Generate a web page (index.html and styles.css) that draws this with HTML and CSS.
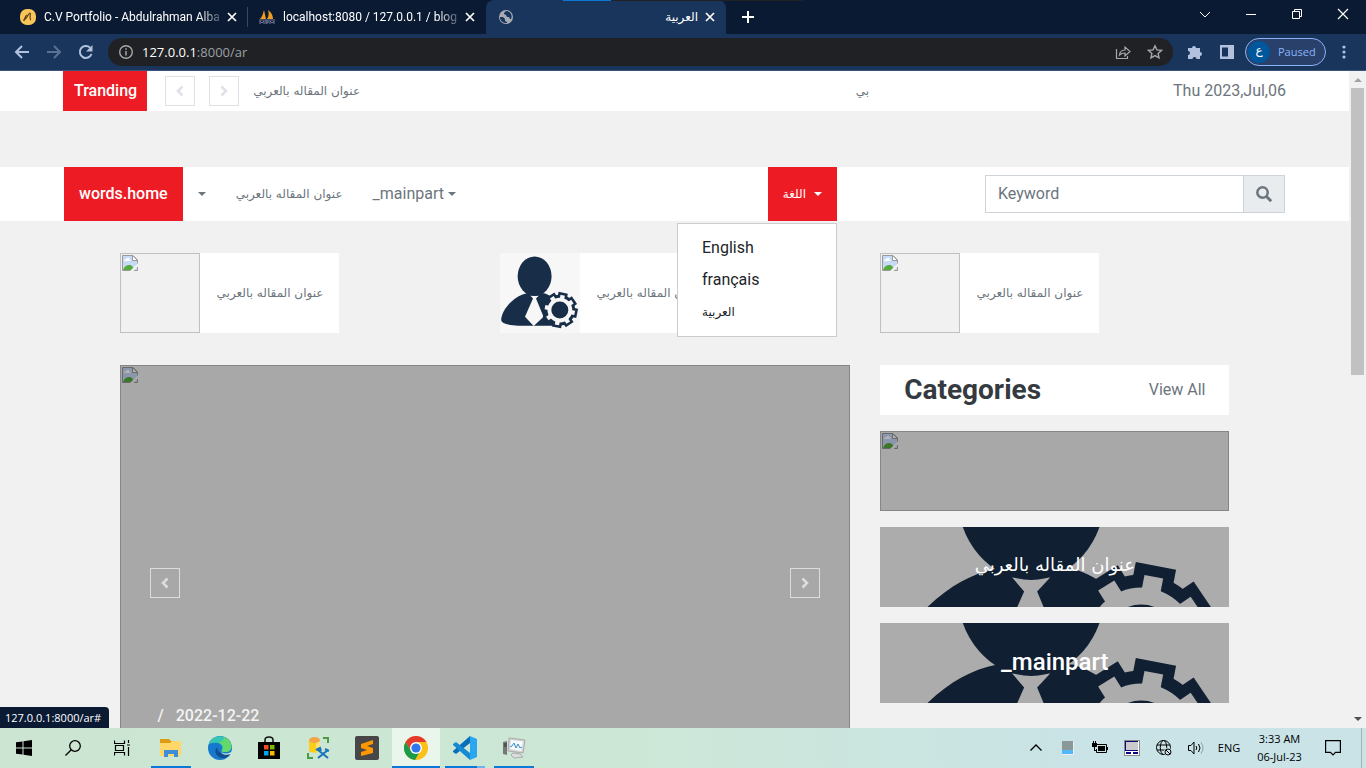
FILE: index.html
```html
<!DOCTYPE html>
<html lang="en">
<head>
<meta charset="utf-8">
<title>العربية</title>
<link rel="stylesheet" href="styles.css">
</head>
<body>
<svg class="defs" aria-hidden="true">
  <symbol id="broken" viewBox="0 0 16 16">
    <path d="M.5.5h10.500l4.500 4.500v10.500H.5z" fill="#c6d9f6" stroke="#999"/>
    <path d="M2 6c0-2 2-1 2.500-2.500C6 2 7.500 3 7.500 4.500 9 4.500 9 6 8 6z" fill="#fff"/>
    <path d="M1 15c1.500-4 4-5 6.500-5 2 0 3.500 1.500 5 5z" fill="#57ab3c"/>
    <path d="M10.500.5v5h5z" fill="#fff" stroke="#999"/>
    <path d="M8 16 16 8v3.500L11.500 16z" fill="#f1f1f1"/>
  </symbol>
  <symbol id="person" viewBox="0 0 349 349" preserveAspectRatio="xMidYMid slice">
    <rect width="349" height="349" fill="#f7f7f7"/>
    <path d="M5 290C8 262 26 234 48 214c22-21 44-33 69-38h76c12 4 28 12 40 22v119H80c-42-2-75-9-75-27z" fill="#182e48"/>
    <path d="M132 185h38l-13 14 33 79-43 40-38-40 35-79z" fill="#f7f7f7"/>
    <ellipse cx="151" cy="101.500" rx="74" ry="86" fill="#182e48"/>
    <g transform="translate(261 249)">
      <g fill="#182e48"><circle r="67"/>
        <path d="M-20.500-77h41V0h-41z" transform="rotate(11)"/><path d="M-20.500-77h41V0h-41z" transform="rotate(56)"/><path d="M-20.500-77h41V0h-41z" transform="rotate(101)"/><path d="M-20.500-77h41V0h-41z" transform="rotate(146)"/><path d="M-20.500-77h41V0h-41z" transform="rotate(191)"/><path d="M-20.500-77h41V0h-41z" transform="rotate(236)"/><path d="M-20.500-77h41V0h-41z" transform="rotate(281)"/><path d="M-20.500-77h41V0h-41z" transform="rotate(328)"/>
      </g>
      <g fill="#f7f7f7"><circle r="54"/>
        <path d="M-9.500-66h19V0h-19z" transform="rotate(11)"/><path d="M-9.500-66h19V0h-19z" transform="rotate(56)"/><path d="M-9.500-66h19V0h-19z" transform="rotate(101)"/><path d="M-9.500-66h19V0h-19z" transform="rotate(146)"/><path d="M-9.500-66h19V0h-19z" transform="rotate(191)"/><path d="M-9.500-66h19V0h-19z" transform="rotate(236)"/><path d="M-9.500-66h19V0h-19z" transform="rotate(281)"/><path d="M-9.500-66h19V0h-19z" transform="rotate(328)"/>
      </g>
      <circle r="37" fill="#182e48"/>
    </g>
  </symbol>
  <symbol id="left" viewBox="0 0 16 16"><path d="M10.500 3.500 6 8l4.500 4.500" fill="none" stroke="currentColor" stroke-width="2.500"/></symbol>
  <symbol id="right" viewBox="0 0 16 16"><path d="M5.500 3.500 10 8l-4.500 4.500" fill="none" stroke="currentColor" stroke-width="2.500"/></symbol>
  <symbol id="close" viewBox="0 0 16 16"><path d="m4 4 8 8m0-8-8 8" fill="none" stroke="currentColor" stroke-width="1.700"/></symbol>
</svg>
<div class="screen">
  <header class="tabs">
    <div class="tab">
      <svg class="i16" viewBox="0 0 16 16"><rect width="16" height="16" rx="7" fill="#f9c55b"/><path d="M3 11c4 0 5-7 7-7 1 0-1 6 1 7M4 12c1-4 2-6 3-6" fill="none" stroke="#5e4013" stroke-width="1.200"/></svg>
      <span class="tab-title">C.V Portfolio - Abdulrahman Alba</span>
      <button class="tab-x" aria-label="Close tab"><svg class="i16"><use href="#close"/></svg></button>
    </div>
    <div class="tab tab-two">
      <svg class="i16" viewBox="0 0 16 16"><path d="M1 10C3 8 4 5 5 1l2 9zM8 10c2-3 2-6 1-9 3 2 5 5 5 9z" fill="#f29b22"/><path d="M0 11h16M1 15v-3l2 2 2-2v3M7 15v-3h2v2H7m4 1v-3l2 2 2-2v3" fill="none" stroke="#777b9f"/></svg>
      <span class="tab-title">localhost:8080 / 127.0.0.1 / blog /</span>
      <button class="tab-x" aria-label="Close tab"><svg class="i16"><use href="#close"/></svg></button>
    </div>
    <div class="tab tab-on">
      <svg class="i16" viewBox="0 0 16 16"><circle cx="8" cy="8" r="7" fill="#a7acb4"/><path d="M2 8h3l2 2v2l2 1v1c-4 0-7-2-7-6zM8 2 6 4v1l2 1 1 2h2l1 2h1c2-4-1-8-5-8z" fill="#1a355b"/></svg>
      <span class="tab-title ar">العربية</span>
      <button class="tab-x" aria-label="Close tab"><svg class="i16"><use href="#close"/></svg></button>
    </div>
    <button class="newtab" aria-label="New tab"><svg class="i16" viewBox="0 0 16 16"><path d="M8 2v12M2 8h12" stroke="#fff" stroke-width="2"/></svg></button>
    <div class="winctl">
      <button aria-label="Search tabs"><svg class="i16" viewBox="0 0 16 16"><path d="m3 6 5 5 5-5" fill="none" stroke="currentColor"/></svg></button>
      <button aria-label="Minimize"><svg class="i16" viewBox="0 0 16 16"><path d="M3 8.500h10" stroke="currentColor"/></svg></button>
      <button aria-label="Restore"><svg class="i16" viewBox="0 0 16 16"><path d="M3.500 5.500h7v7h-7zM5.500 5V3.500h7v7H11" fill="none" stroke="currentColor"/></svg></button>
      <button aria-label="Close"><svg class="i16" viewBox="0 0 16 16"><path d="m3 3 10 10m0-10L3 13" stroke="currentColor" stroke-width="1.200"/></svg></button>
    </div>
    <div class="drag"></div>
  </header>
  <div class="toolbar">
    <button class="tool" aria-label="Back"><svg class="i16" viewBox="0 0 16 16"><path d="M15 8H2m6-6L2 8l6 6" fill="none" stroke="currentColor" stroke-width="2"/></svg></button>
    <button class="tool dim" aria-label="Forward"><svg class="i16" viewBox="0 0 16 16"><path d="M1 8h13M8 2l6 6-6 6" fill="none" stroke="currentColor" stroke-width="2"/></svg></button>
    <button class="tool" aria-label="Reload"><svg class="i16" viewBox="0 0 16 16"><path d="M13.500 10A6 6 0 1 1 12 3.600" fill="none" stroke="currentColor" stroke-width="2"/><path d="M14.500 1v6.500H8z" fill="currentColor"/></svg></button>
    <div class="omni">
      <svg class="i16" viewBox="0 0 16 16"><circle cx="8" cy="8" r="6.300" fill="none" stroke="currentColor" stroke-width="1.400"/><path d="M8 7v4.500M8 4.200v1.600" stroke="currentColor" stroke-width="1.500"/></svg>
      <span class="url"><b>127.0.0.1</b>:8000/ar</span>
      <button class="tool" aria-label="Share"><svg class="i16" viewBox="0 0 16 16"><path d="M1.500 5v9.500h11V12M4.500 11c.5-4 3-5 5.500-5V3l5 4.500-5 4.500V9c-2.500 0-4 .5-5.500 2z" fill="none" stroke="currentColor" stroke-width="1.200"/></svg></button>
      <button class="tool" aria-label="Bookmark"><svg class="i16" viewBox="0 0 16 16"><path d="m8 1.800 1.900 4.100 4.500.5-3.300 3 .9 4.400-4-2.200-4 2.200.9-4.400-3.300-3 4.500-.5z" fill="none" stroke="currentColor" stroke-width="1.400"/></svg></button>
    </div>
    <button class="tool ext" aria-label="Extensions"><svg class="i16" viewBox="0 0 16 16"><path d="M1 4h4a2 2 0 1 1 4 0h4v4a2 2 0 1 1 0 4v3H9.500a2 2 0 0 0-4 0H1v-4a2 2 0 1 0 0-4z" fill="currentColor"/></svg></button>
    <button class="tool" aria-label="Side panel"><svg class="i16" viewBox="0 0 16 16"><path d="M1 1h14v14H1zm2 2.500v9h6v-9z" fill="currentColor" fill-rule="evenodd"/></svg></button>
    <button class="profile"><span class="avatar">ع</span>Paused</button>
    <button class="tool dots" aria-label="Menu"><svg class="i16" viewBox="0 0 16 16"><circle cx="8" cy="3" r="1.600"/><circle cx="8" cy="8" r="1.600"/><circle cx="8" cy="13" r="1.600"/></svg></button>
  </div>

  <div class="view">
    <main class="page">
      <div class="topbar">
        <div class="trend">Tranding</div>
        <button class="step first" aria-label="Previous"><svg class="i16"><use href="#left"/></svg></button>
        <button class="step" aria-label="Next"><svg class="i16"><use href="#right"/></svg></button>
        <div class="ticker ar"><a href="#" dir="rtl">عنوان المقاله بالعربي</a><a href="#" dir="rtl">بي</a></div>
        <div class="date">Thu 2023,Jul,06</div>
      </div>
      <nav class="nav">
        <a class="nav-link on" href="#">words.home</a>
        <button class="nav-link" aria-label="More"><span class="caret"></span></button>
        <a class="nav-link ar" href="#" dir="rtl">عنوان المقاله بالعربي</a>
        <button class="nav-link">_mainpart<span class="caret near"></span></button>
        <div class="lang">
          <button class="nav-link on"><span class="ar">اللغة</span><span class="caret far"></span></button>
          <div class="menu">
            <a href="#">English</a>
            <a href="#">français</a>
            <a href="#" class="ar">العربية</a>
          </div>
        </div>
        <form class="search">
          <input type="text" placeholder="Keyword" aria-label="Keyword">
          <button type="button" aria-label="Search"><svg class="i16" viewBox="0 0 16 16"><circle cx="6.500" cy="6.500" r="5.200" fill="none" stroke="currentColor" stroke-width="2.500"/><path d="m10.500 10.500 4.700 4.700" stroke="currentColor" stroke-width="3"/></svg></button>
        </form>
      </nav>

      <div class="container">
        <section class="posts">
          <article class="post"><span class="missing"><svg class="i16"><use href="#broken"/></svg></span><a class="ar" href="#" dir="rtl">عنوان المقاله بالعربي</a></article>
          <article class="post"><svg class="thumb"><use href="#person"/></svg><a class="ar" href="#" dir="rtl">عنوان المقاله بالعربي</a></article>
          <article class="post"><span class="missing"><svg class="i16"><use href="#broken"/></svg></span><a class="ar" href="#" dir="rtl">عنوان المقاله بالعربي</a></article>
        </section>
        <div class="columns">
          <section class="slider shade missing">
            <svg class="i16"><use href="#broken"/></svg>
            <div class="slider-body">
              <div class="slider-nav">
                <button class="step lite" aria-label="Previous"><svg class="i16"><use href="#left"/></svg></button>
                <button class="step lite" aria-label="Next"><svg class="i16"><use href="#right"/></svg></button>
              </div>
              <div class="meta"><span>/</span><a href="#">2022-12-22</a></div>
            </div>
          </section>
          <aside class="side">
            <div class="side-head"><h2>Categories</h2><a href="#">View All</a></div>
            <div class="cat shade missing"><svg class="i16"><use href="#broken"/></svg></div>
            <div class="cat shade"><svg class="cover"><use href="#person"/></svg><a class="ar" href="#" dir="rtl">عنوان المقاله بالعربي</a></div>
            <div class="cat shade"><svg class="cover"><use href="#person"/></svg><a href="#">_mainpart</a></div>
          </aside>
        </div>
      </div>
    </main>
    <div class="scroll"><span class="up"></span><span class="handle"></span><span class="down"></span></div>
    <div class="status">127.0.0.1:8000/ar#</div>
  </div>

  <footer class="taskbar">
    <button class="app" aria-label="Start"><svg class="i16" viewBox="0 0 16 16"><path d="M0 2.300 6.500 1.400v6.100H0zM7.500 1.200 16 0v7.500H7.500zM0 8.500h6.500v6.100L0 13.700zM7.500 8.500H16V16l-8.500-1.200z"/></svg></button>
    <button class="app" aria-label="Search"><svg class="i16" viewBox="0 0 16 16"><circle cx="10" cy="6" r="5.300" fill="none" stroke="#000" stroke-width="1.300"/><path d="M6.300 9.700.5 15.500" stroke="#000" stroke-width="1.300"/></svg></button>
    <button class="app" aria-label="Task view"><svg class="i16" viewBox="0 0 16 16"><path d="M.5.500v3h10v-3M.5 15.500v-3h10v3M1.500 5.500h8v5h-8zM14.500 0v3M14.500 7v9M13 5h3" fill="none" stroke="#000" stroke-width="1.200"/></svg></button>
    <button class="app run" aria-label="File Explorer"><svg class="i24" viewBox="0 0 24 24"><path d="M1 4V3h9l2 2h10v4H1z" fill="#dc9d14"/><path d="M1 7h10l2-2h9v15H1z" fill="#ffd869"/><path d="M5 21v-7h14v7h-4v-3H9v3z" fill="#3d8ed8"/></svg></button>
    <button class="app" aria-label="Edge"><svg class="i24" viewBox="0 0 24 24"><circle cx="12" cy="12" r="12" fill="#1779ce"/><path d="M1 8C4-1 16-3 22 6c4 7-1 11-6 10-2 0-3-1-2-2 2-6-5-9-13-6z" fill="#36c6b4"/><path d="M16 1c9 4 10 14 2 15-4 0-5-1-4-2 3-3 0-7-4-7 4-1 6-3 6-6z" fill="#65d86a"/><path d="M9 11c-4 5 0 12 8 11 3-1 5-3 6-5-5 3-13 1-14-6z" fill="#124f91"/><path d="M14 14c-2 3 4 5 9 2l1-1-1 3c-6 2-11 0-9-4z" fill="#cfe7d7"/></svg></button>
    <button class="app" aria-label="Store"><svg class="i24" viewBox="0 0 24 24"><path d="M8 7V4c0-4 8-4 8 0v3" fill="none" stroke="#111" stroke-width="1.500"/><path d="M1 6h22v17H1z"/><path d="M7 9h4.500v4.500H7z" fill="#f25022"/><path d="M13 9h4.500v4.500H13z" fill="#7fba00"/><path d="M7 15h4.500v4.500H7z" fill="#00a4ef"/><path d="M13 15h4.500v4.500H13z" fill="#ffb900"/></svg></button>
    <button class="app" aria-label="Database tool"><svg class="i24" viewBox="0 0 24 24"><path d="M17 2h5v5M2 17v5h5" fill="none" stroke="#4b9a45" stroke-width="2"/><path d="M3 4v11c2 2 9 2 11 0V4z" fill="#fbcf18"/><path d="M10 5h4v10l-4 1z" fill="#f9e27c"/><ellipse cx="8.500" cy="4" rx="5.500" ry="3" fill="#f3a34a"/><path d="m12 22 10-8M12 14l10 8M10 14l4-2 1 3M19 13l4 2" stroke="#1674bd" stroke-width="2" fill="none"/></svg></button>
    <button class="app" aria-label="Sublime Text"><svg class="i24" viewBox="0 0 24 24"><rect width="24" height="24" rx="2" fill="#474747"/><path d="m6 8 12-4v4l-6 2 6 2v5L6 20v-4l6-2-6-2z" fill="#ff9800"/></svg></button>
    <button class="app run full" aria-label="Chrome"><svg class="i24" viewBox="0 0 24 24"><circle cx="12" cy="12" r="12" fill="#fbc116"/><path d="M1.600 6A12 12 0 0 1 22.400 6H12L7 15z" fill="#e33b2e"/><path d="M1.600 6 7 15l9 0-5 9A12 12 0 0 1 1.600 6z" fill="#1a9a4b"/><circle cx="12" cy="12" r="6" fill="#fff"/><circle cx="12" cy="12" r="4.600" fill="#2f77ea"/></svg></button>
    <button class="app run two" aria-label="Visual Studio Code"><svg class="i24" viewBox="0 0 24 24"><path d="m17 0 7 3v18l-7 3z" fill="#2ba7ef"/><path d="M17 0v7L3 18l-3-2v-1z" fill="#0a6dba"/><path d="M17 24v-7L3 6 0 8v1z" fill="#168bd3"/></svg></button>
    <button class="app run" aria-label="Resource Monitor"><svg class="i24" viewBox="0 0 24 24"><path d="M1 6l4-1v14l-4-1z" fill="#777"/><path d="m7 2 16 2-2 13-15-2z" fill="#d4d4d4" stroke="#aaa"/><path d="m9 4 12 1.500-1.500 9.500L8 13z" fill="#f5fbff"/><path d="m8 11 2-1 2-3 2 5 2-4 2 4 2-1" fill="none" stroke="#3c8dc5"/><path d="m11 17 7 1 3 3-9 1-3-3z" fill="#ddd" stroke="#aaa"/><path d="M2 8h3M2 10h3" stroke="#333"/></svg></button>
    <div class="tray">
      <button aria-label="Show hidden icons"><svg class="i16" viewBox="0 0 16 16"><path d="m2.500 10.500 5.500-5.500 5.500 5.500" fill="none" stroke="#000" stroke-width="1.300"/></svg></button>
      <button aria-label="Disk"><svg class="i16" viewBox="0 0 16 16"><path d="M2 1h12v14H2z" fill="#eee"/><path d="M2 1h11v9H2z" fill="#8b9899"/><path d="M2 10h11v4H2z" fill="#4fb9fb"/></svg></button>
      <button aria-label="Battery"><svg class="i16" viewBox="0 0 16 16"><path d="M5 4.500h9.500v8H4.500V9" fill="none" stroke="#000"/><path d="M6 6h7v5H6zM15 7h1v3h-1zM0 3h5v4H0zM1 1h1v2H1zM3 1h1v2H3zM2 7h1v3h2v1H2z"/></svg></button>
      <button aria-label="Touchpad"><svg class="i16" viewBox="0 0 16 16"><path d="M0 0h16v16H0z" fill="#8a8a8a"/><path d="M1 1h14v14H1z" fill="#fff"/><path d="M1 1h13v10H1z" fill="#0c0782"/><path d="M2 2h12v8H2z" fill="#cbcbcb"/><path d="M2 12h5v2H2zM9 12h5v2H9z" fill="#0c0782"/></svg></button>
      <button aria-label="Network"><svg class="i16" viewBox="0 0 16 16"><g fill="none" stroke="#000"><circle cx="7.500" cy="7.500" r="7"/><ellipse cx="7.500" cy="7.500" rx="3.200" ry="7"/><path d="M1 5h13M1 10h9"/></g><circle cx="12" cy="12" r="4" fill="#cbe3e6"/><circle cx="12" cy="12" r="3" fill="none" stroke="#000"/><path d="m10 10 4 4" stroke="#000"/></svg></button>
      <button aria-label="Volume"><svg class="i16" viewBox="0 0 16 16"><path d="M.5 5.500H3l3-3.500v12l-3-3.500H.5z" fill="none" stroke="#000"/><path d="M8 6q1.500 2 0 4M10.500 4q3 4 0 8" fill="none" stroke="#000"/><path d="M13 2.500q4 5.500 0 11" fill="none" stroke="#8da0a3"/></svg></button>
      <span class="eng">ENG</span>
      <div class="clock"><span>3:33 AM</span><span>06-Jul-23</span></div>
      <button class="note" aria-label="Notifications"><svg class="i16" viewBox="0 0 16 16"><path d="M.6.600h14.800v11.800H10.500L8 15l-2.500-2.600H.6z" fill="none" stroke="#000" stroke-width="1.200"/></svg></button>
    </div>
  </footer>
</div>
</body>
</html>
```
FILE: styles.css
```css
* { box-sizing: border-box; }
body {
  margin: 0;
  font: 16px/24px Roboto, "DejaVu Sans", sans-serif;
  color: #6c757d;
}
a { color: inherit; text-decoration: none; }
button {
  margin: 0;
  padding: 0;
  border: 0;
  background: none;
  font: inherit;
  color: inherit;
}
svg { display: block; flex: none; }
.defs { position: absolute; width: 0; height: 0; }
.i16 { width: 16px; height: 16px; }
.i24 { width: 24px; height: 24px; }
.ar { font-family: "DejaVu Sans", sans-serif; font-size: 12px; font-weight: 400; }

.screen {
  display: grid;
  grid-template-rows: 34px 37px minmax(0, 1fr) 40px;
  height: 100vh;
  overflow: hidden;
}

/* Browser window */
.tabs {
  position: relative;
  display: flex;
  background: #0a1a33;
  color: #fff;
  font: 12px/16px Roboto, sans-serif;
}
.tab {
  display: flex;
  align-items: center;
  width: 240px;
  padding: 0 8px 0 20px;
}
.tab:first-child {
  width: 248px;
  background: linear-gradient(#39475c, #39475c) right center / 1px 20px no-repeat;
}
.tab-two { width: 238px; padding-left: 11px; }
.tab-title { flex: 1; min-width: 0; margin: 0 4px 0 8px; white-space: nowrap; }
.tab:not(.tab-on) .tab-title {
  -webkit-mask-image: linear-gradient(90deg, #000 88%, transparent 104%);
  mask-image: linear-gradient(90deg, #000 88%, transparent 104%);
}
.tab-title.ar { text-align: right; }
.tab-x { flex: none; width: 16px; }
.tab-on {
  padding-left: 12px;
  background: #1a355b;
  border-radius: 8px 8px 0 0;
}
.newtab { width: 44px; display: grid; place-items: center; }
.winctl { display: flex; margin-left: auto; }
.winctl button { width: 46px; padding-bottom: 6px; display: grid; place-items: center; }
.drag {
  position: absolute;
  top: 0;
  left: 563px;
  width: 240px;
  height: 1px;
  background: linear-gradient(90deg, #0a78d7 20%, #202124 20%);
}
.toolbar {
  display: flex;
  align-items: center;
  padding: 0 6px;
  background: #1a355b;
  border-bottom: 1px solid #3d5478;
  color: #b2c2de;
}
.tool { width: 32px; height: 28px; display: grid; place-items: center; }
.dim { color: #5a7194; }
.omni {
  flex: 1;
  display: flex;
  align-items: center;
  height: 28px;
  margin: 0 6px;
  padding: 0 2px 0 10px;
  border-radius: 14px;
  background: #202124;
  color: #a5a8ac;
}
.url { flex: 1; margin-left: 8px; font: 13px/20px "Open Sans", sans-serif; color: #9aa0a6; }
.url b { font-weight: 400; color: #fff; }
.profile {
  display: flex;
  align-items: center;
  gap: 8px;
  width: 81px;
  height: 28px;
  margin: 0 2px;
  padding-left: 2px;
  border: 1px solid #8ab4f8;
  border-radius: 14px;
  background: #28406a;
  color: #8ab4f8;
  font: 11px/16px "Open Sans", sans-serif;
}
.avatar {
  width: 22px;
  height: 22px;
  border-radius: 50%;
  background: #01579b;
  color: #fff;
  font: 12px/18px "DejaVu Sans", sans-serif;
  text-align: center;
}
.dots { fill: currentColor; }

/* Web page */
.view { position: relative; display: flex; min-height: 0; }
.page { flex: 1; min-width: 0; background: #f1f1f1; overflow: hidden; }
.scroll {
  display: flex;
  flex-direction: column;
  align-items: center;
  width: 17px;
  padding: 7px 2px;
  background: #f1f1f1;
}
.up, .down { border: 4px solid transparent; border-top: 0; border-bottom: 4px solid #a3a3a3; }
.down { border-bottom: 0; border-top: 4px solid #505050; margin-top: auto; }
.handle { width: 13px; height: 287px; margin-top: 6px; background: #c1c1c1; }
.status {
  position: absolute;
  left: 0;
  bottom: 0;
  padding: 2px 8px 2px 5px;
  border-radius: 0 4px 0 0;
  background: #0a1a33;
  color: #fff;
  font: 11px/17px "Open Sans", sans-serif;
}

.topbar { display: flex; align-items: center; height: 40px; padding: 0 63px; background: #fff; }
.trend {
  padding: 8px 10px 8px 11px;
  background: #ed1c24;
  color: #fff;
  font-weight: 500;
}
.step {
  display: grid;
  place-items: center;
  width: 30px;
  height: 30px;
  border: 1px solid #dee2e6;
  color: #dee2e6;
}
.first { margin: 0 14px 0 18px; }
.lite { border-color: #ddd; color: #ddd; }
.ticker { flex: 1; display: flex; justify-content: space-between; padding: 0 304px 0 14px; white-space: nowrap; }
.date { white-space: nowrap; }

.nav { display: flex; height: 54px; margin-top: 56px; padding: 0 64px; background: #fff; }
.nav-link { display: flex; align-items: center; height: 54px; padding: 0 15px; white-space: nowrap; }
.on { background: #ed1c24; color: #fff; font-weight: 500; }
.caret { border: 4px solid transparent; border-top-color: currentColor; border-bottom: 0; }
.near { margin-left: 4px; }
.far { margin-left: 8px; }
.lang { position: relative; margin: 0 148px 0 auto; }
.menu {
  position: absolute;
  z-index: 2;
  top: 56px;
  right: 0;
  display: flex;
  flex-direction: column;
  width: 160px;
  padding: 8px 0;
  border: 1px solid #ccc;
  background: #fff;
  color: #212529;
}
.menu a { padding: 4px 24px; }
.search { display: flex; align-self: center; width: 300px; height: 38px; }
.search input {
  flex: 1;
  min-width: 0;
  padding: 0 12px;
  border: 1px solid #ced4da;
  border-radius: 0;
  background: #fff;
  font: inherit;
}
.search input::placeholder { color: #6c757d; opacity: 1; }
.search button {
  width: 41px;
  display: grid;
  place-items: center;
  border: 1px solid #ced4da;
  border-left: 0;
  background: #e9ecef;
}

.container { max-width: 1140px; margin: 0 auto; padding: 32px 15px 0; }
.posts { display: grid; grid-template-columns: repeat(3, 1fr); gap: 30px; }
.post { display: flex; height: 80px; }
.post a {
  display: flex;
  align-items: center;
  width: 139px;
  padding: 0 15px;
  background: #fff;
  white-space: nowrap;
}
.thumb, .post .missing { flex: none; width: 80px; height: 80px; }
.missing { display: block; padding: 1px; border: 1px solid #c0c0c0; }
.columns { display: grid; grid-template-columns: minmax(0, 730fr) minmax(0, 349fr); gap: 30px; margin-top: 32px; }
.shade { position: relative; }
.shade::after { content: ""; position: absolute; inset: -1px; background: rgba(0, 0, 0, .3); }
.slider { height: 436px; }
.slider-body {
  position: absolute;
  z-index: 1;
  inset: 0;
  display: grid;
  grid-template-rows: 1fr auto 1fr;
  padding: 0 29px;
  color: #f4f4f4;
}
.slider-nav { grid-row: 2; display: flex; justify-content: space-between; }
.meta { grid-row: 3; display: flex; gap: 12px; align-self: end; padding: 0 8px 72px; font-weight: 500; }
.side { display: grid; gap: 16px; align-content: start; }
.side-head {
  display: flex;
  align-items: center;
  justify-content: space-between;
  height: 50px;
  padding: 0 24px;
  background: #fff;
}
.side-head h2 { margin: 0; color: #343a40; font-size: 28px; line-height: 34px; font-weight: 700; }
.cat { height: 80px; display: grid; }
.cat:not(.missing)::after { inset: 0; }
.cover { grid-area: 1 / 1; width: 100%; height: 80px; }
.cat a {
  z-index: 1;
  grid-area: 1 / 1;
  place-self: center;
  color: #fff;
  font-size: 24px;
  line-height: 28px;
  font-weight: 500;
  padding-bottom: 2px;
}
.cat a.ar { padding-bottom: 4px; font-size: 18px; font-weight: 400; }

/* Desktop taskbar */
.taskbar {
  display: flex;
  background: linear-gradient(90deg, #cbe5d2, #cde7d6 45%, #c9e3e7 80%);
  color: #000;
  font: 12px/18px "Open Sans", sans-serif;
}
.app { display: grid; place-items: center; width: 48px; height: 40px; margin-right: 1px; }
.run {
  background: linear-gradient(#0a78d7, #0a78d7) center bottom / 40px 2px no-repeat;
}
.full { background-color: #eaf5ec; background-size: 48px 2px; }
.two { background-image: linear-gradient(90deg, #0a78d7 80%, #6fb0e6 80%); }
.tray {
  display: flex;
  align-items: center;
  margin-left: auto;
  padding-right: 8px;
  background: linear-gradient(#9fb6b9, #9fb6b9) right 4px top / 1px 100% no-repeat;
}
.tray button { width: 32px; height: 40px; display: grid; place-items: center; }
.eng { width: 34px; text-align: center; font-size: 11px; }
.clock { display: flex; flex-direction: column; width: 67px; text-align: center; font-size: 11px; }
.tray .note { width: 45px; padding-right: 5px; }
```
